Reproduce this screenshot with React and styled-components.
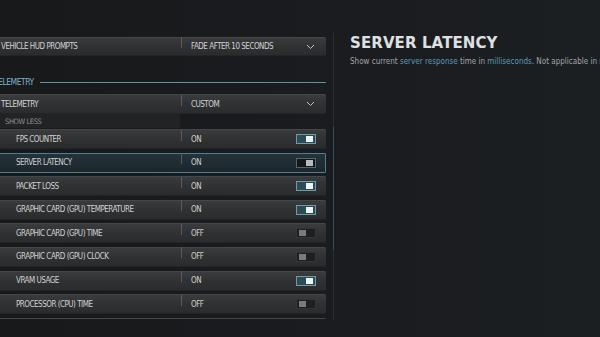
import styled, { createGlobalStyle } from 'styled-components'

const GlobalStyle = createGlobalStyle`
  * { margin: 0; padding: 0; box-sizing: border-box; }
  html, body { width: 600px; height: 337px; overflow: hidden; }
  body {
    background: linear-gradient(90deg, #17191b 0%, #1a1c1f 60%, #1c1f22 100%);
    font-family: "DejaVu Sans Condensed", "DejaVu Sans", sans-serif;
    font-stretch: condensed;
  }
`

const Page = styled.div`
  display: flex;
  width: 600px;
  height: 337px;
  overflow: hidden;
`

const Settings = styled.div`
  flex: none;
  width: 338px;
  height: 319px;
  overflow: hidden;
  margin-left: -12px;
  padding-top: 37px;
  display: flex;
  flex-direction: column;
`

const Row = styled.div`
  flex: none;
  height: ${p => p.$h || 20}px;
  margin-top: ${p => p.$mt || 0}px;
  display: grid;
  grid-template-columns: 192px 1fr auto;
  align-items: center;
  background: ${p => p.$active
    ? 'linear-gradient(180deg, #25323a 0%, #1c262c 100%)'
    : 'linear-gradient(180deg, #3a3b3c 0%, #313233 45%, #2a2b2c 100%)'};
  border: 1px solid ${p => p.$active ? '#4d7f94' : 'transparent'};
  border-top-color: ${p => p.$active ? '#4d7f94' : '#454647'};
  border-bottom-color: ${p => p.$active ? '#4d7f94' : '#232425'};
  border-radius: 1px;
  color: #d0d1d2;
  font-size: 8px;
  letter-spacing: -0.5px;
`

const Label = styled.div`
  padding-left: ${p => p.$indent ? 27 : 12}px;
  white-space: nowrap;
`

const Value = styled.div`
  position: relative;
  padding-left: 10px;
  white-space: nowrap;
  &::before {
    content: '';
    position: absolute;
    left: 0;
    top: -5px;
    width: 1px;
    height: 11px;
    background: #5a5b5c;
  }
`

const Control = styled.div`
  padding-right: 9px;
  display: flex;
  align-items: center;
`

const Chevron = () => (
  <svg width="9" height="6" viewBox="0 0 9 6" style={{ marginRight: 1 }}>
    <path d="M1 1 L4.5 4.5 L8 1" fill="none" stroke="#c4c5c6" strokeWidth="1" />
  </svg>
)

const Track = styled.div`
  width: 20px;
  height: 10px;
  padding: 1px 2px;
  display: flex;
  justify-content: ${p => p.$on ? 'flex-end' : 'flex-start'};
  align-items: center;
  border: 1px solid ${p => p.$focus ? '#4b6a77' : p.$on ? '#6f9aa8' : '#343536'};
  background: ${p => p.$focus ? '#151617' : p.$on ? '#2e4a53' : '#1e1f20'};
`

const Knob = styled.div`
  width: 7px;
  height: 6px;
  background: ${p => p.$focus ? '#b9babb' : p.$on ? '#eef3f5' : '#7a7b7c'};
`

const Toggle = ({ on, focus }) => (
  <Track $on={on} $focus={focus}>
    <Knob $on={on} $focus={focus} />
  </Track>
)

const Header = styled.div`
  flex: none;
  margin-top: 20px;
  height: 12px;
  display: flex;
  align-items: center;
  gap: 6px;
  padding-left: 6px;
  color: #7fb3c8;
  font-size: 8.5px;
  letter-spacing: -0.5px;
  &::after {
    content: '';
    flex: 1;
    height: 1px;
    background: #5b90a5;
  }
`

const ShowLess = styled.div`
  flex: none;
  width: 192px;
  height: 14px;
  padding-left: 17px;
  display: flex;
  align-items: center;
  background: #212325;
  color: #8d8f91;
  font-size: 7.5px;
  letter-spacing: -0.4px;
`

const SubList = styled.div`
  display: flex;
  flex-direction: column;
  gap: 3.6px;
  margin-top: 1px;
`

const Rail = styled.div`
  flex: none;
  position: relative;
  width: 1px;
  margin: 33px 0 17px 7px;
  background: #2b2e31;
`

const Thumb = styled.div`
  position: absolute;
  left: 0;
  top: 94px;
  width: 1px;
  height: 123px;
  background: #34505c;
`

const Info = styled.div`
  flex: none;
  padding: 36px 0 0 16px;
  white-space: nowrap;
`

const Title = styled.h1`
  font-family: "DejaVu Sans", sans-serif;
  font-stretch: normal;
  font-weight: 900;
  font-size: 15px;
  letter-spacing: 0.1px;
  color: #dfe0e1;
  line-height: 15px;
`

const Desc = styled.p`
  margin-top: 6px;
  font-size: 8px;
  color: #a2a5a8;
`

const Link = styled.span`
  color: #5b9bbb;
`

const items = [
  ['FPS COUNTER', true],
  ['SERVER LATENCY', true, true],
  ['PACKET LOSS', true],
  ['GRAPHIC CARD (GPU) TEMPERATURE', true],
  ['GRAPHIC CARD (GPU) TIME', false],
  ['GRAPHIC CARD (GPU) CLOCK', false],
  ['VRAM USAGE', true],
  ['PROCESSOR (CPU) TIME', false],
  ['', false],
]

export default function App() {
  return (
    <>
      <GlobalStyle />
      <Page>
        <Settings>
          <Row $h={19}>
            <Label>VEHICLE HUD PROMPTS</Label>
            <Value>FADE AFTER 10 SECONDS</Value>
            <Control><Chevron /></Control>
          </Row>
          <Header>TELEMETRY</Header>
          <Row $h={20} $mt={6}>
            <Label>TELEMETRY</Label>
            <Value>CUSTOM</Value>
            <Control><Chevron /></Control>
          </Row>
          <ShowLess>SHOW LESS</ShowLess>
          <SubList>
            {items.map(([name, on, focus], i) => (
              <Row key={i} $active={focus}>
                <Label $indent>{name}</Label>
                <Value>{name ? (on ? 'ON' : 'OFF') : ''}</Value>
                <Control>{name && <Toggle on={on} focus={focus} />}</Control>
              </Row>
            ))}
          </SubList>
        </Settings>
        <Rail><Thumb /></Rail>
        <Info>
          <Title>SERVER LATENCY</Title>
          <Desc>
            Show current <Link>server response</Link> time in <Link>milliseconds</Link>. Not applicable in menus.
          </Desc>
        </Info>
      </Page>
    </>
  )
}
